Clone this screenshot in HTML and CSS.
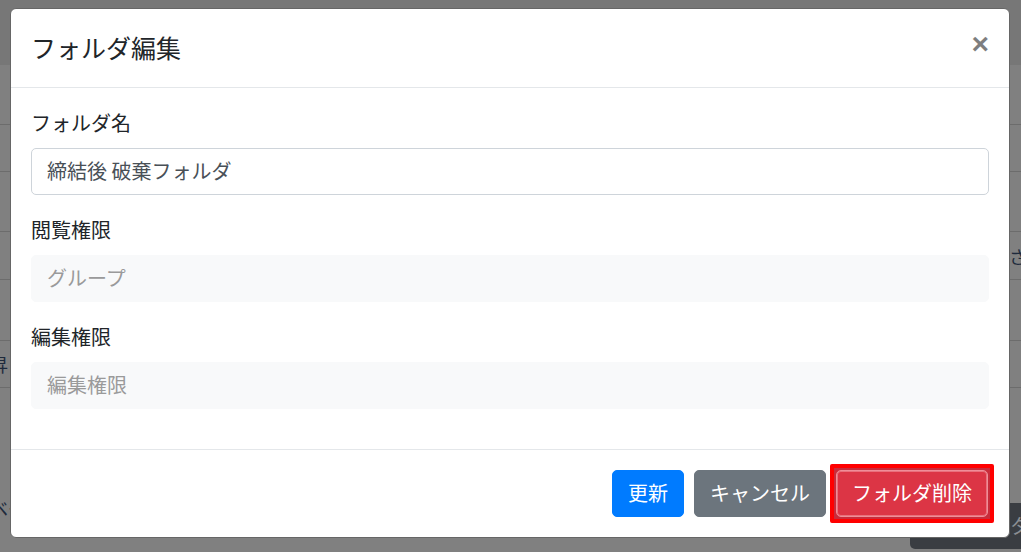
FILE: index.html
```html
<!DOCTYPE html>
<html lang="ja">
<head>
<meta charset="utf-8">
<title>フォルダ編集</title>
<link rel="stylesheet" href="styles.css">
</head>
<body>
<div class="page">
  <div class="navbar"></div>
  <div class="row h60"></div>
  <div class="row h47"></div>
  <div class="row h60"></div>
  <div class="row h48"><span class="cell-right">さ</span></div>
  <div class="row h61"></div>
  <div class="row h47"><span class="cell-left">昇</span></div>
  <div class="page-note"><span class="cell-left">ベー</span></div>
  <div class="page-actions"><span class="dark-btn">タ</span></div>
</div>

<div class="modal">
  <div class="modal-header">
    <h5 class="modal-title">フォルダ編集</h5>
    <button class="close" type="button">×</button>
  </div>
  <div class="modal-body">
    <div class="form-group">
      <label class="label">フォルダ名</label>
      <div class="input">締結後 破棄フォルダ</div>
    </div>
    <div class="form-group">
      <label class="label">閲覧権限</label>
      <div class="input input-muted">グループ</div>
    </div>
    <div class="form-group">
      <label class="label">編集権限</label>
      <div class="input input-muted">編集権限</div>
    </div>
  </div>
  <div class="modal-footer">
    <button class="btn btn-primary" type="button">更新</button>
    <button class="btn btn-secondary" type="button">キャンセル</button>
    <span class="mark"><button class="btn btn-danger btn-focus" type="button">フォルダ削除</button></span>
  </div>
</div>
</body>
</html>
```

FILE: styles.css
```css
* { box-sizing: border-box; }
html, body { margin: 0; padding: 0; }
body {
  width: 1021px;
  height: 552px;
  overflow: hidden;
  background: #808080;
  font-family: "Noto Sans CJK JP", "Noto Sans", sans-serif;
  color: #212529;
  position: relative;
}

/* dimmed page behind the modal */
.page { width: 1021px; }
.navbar { height: 65px; background: #777777; }
.row {
  border-bottom: 1px solid #6c6c6c;
  display: flex;
  align-items: center;
  justify-content: space-between;
  font-size: 18px;
  color: #1e2a3c;
}
.h60 { height: 60px; }
.h47 { height: 47px; }
.h48 { height: 48px; }
.h61 { height: 61px; }
.cell-left { margin-left: -10px; font-size: 18px; color: #1e2a3c; }
.cell-right { margin-left: auto; margin-right: -6px; color: #1e2a3c; }
.page-note { margin-top: 107px; height: 24px; font-size: 18px; color: #1e2a3c; }
.page-actions { display: flex; justify-content: flex-end; margin-top: -16px; }
.dark-btn {
  width: 130px;
  height: 46px;
  margin-right: -19px;
  background: #3a3d42;
  border-radius: 5px;
  color: #8a8d92;
  font-size: 20px;
  line-height: 46px;
  padding-left: 100px;
}

/* modal */
.modal {
  position: absolute;
  top: 8px;
  left: 10px;
  width: 1000px;
  background: #fff;
  border: 1px solid #666666;
  border-radius: 6px;
}
.modal-header {
  display: flex;
  align-items: flex-start;
  justify-content: space-between;
  padding: 20px;
  border-bottom: 1px solid #e4e7ea;
}
.modal-title {
  margin: 0;
  font-size: 25px;
  font-weight: 400;
  line-height: 37.5px;
  color: #212529;
}
.close {
  padding: 20px;
  margin: -20px -20px -20px auto;
  background: transparent;
  border: 0;
  font-family: "Liberation Sans", Arial, sans-serif;
  font-size: 30px;
  font-weight: 700;
  line-height: 1;
  color: #000;
  opacity: .5;
}
.modal-body { padding: 20px; }
.form-group { margin-bottom: 20px; }
.label {
  display: block;
  margin-bottom: 10px;
  font-size: 20px;
  line-height: 30px;
  color: #212529;
}
.input {
  height: 47px;
  padding: 7.5px 15px;
  font-size: 20px;
  line-height: 30px;
  color: #495057;
  background: #fff;
  border: 1px solid #ced4da;
  border-radius: 5px;
}
.input-muted {
  background: #f8f9fa;
  border-color: #f8f9fa;
  color: #9a9a9a;
}
.modal-footer {
  display: flex;
  align-items: center;
  justify-content: flex-end;
  padding: 15px;
  border-top: 1px solid #e4e7ea;
}
.btn {
  margin: 5px;
  padding: 7.5px 15px;
  font-family: inherit;
  font-size: 20px;
  line-height: 30px;
  color: #fff;
  border: 1px solid transparent;
  border-radius: 5px;
}
.btn-primary { background: #007bff; border-color: #007bff; }
.btn-secondary { background: #6c757d; border-color: #6c757d; }
.btn-danger { background: #dc3545; border-color: #dc3545; }
.mark {
  display: flex;
  margin: -1px 0 -1px -1px;
  padding: 2px;
  border: 4px solid #ff0000;
  border-radius: 2px;
  background: #c92c3b;
}
.btn-focus {
  margin: 0;
  border-color: #ef8e98;
  box-shadow: inset 0 0 0 1px #e9707c;
}
```
